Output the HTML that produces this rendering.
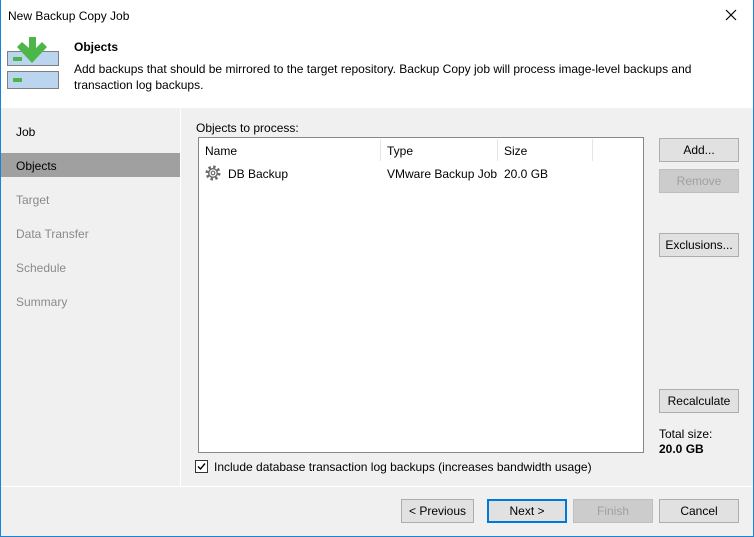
<!DOCTYPE html><html><head><style>
*{box-sizing:border-box;margin:0;padding:0}
body{width:754px;height:537px;overflow:hidden;font-family:"Liberation Sans",sans-serif;font-size:12px;color:#000;background:#f0f0f0;position:relative}
.abs{position:absolute}
.frame{left:0;top:0;width:754px;height:537px;border:1px solid #1883d7;border-top:none}
.btn{position:absolute;background:#e1e1e1;border:1px solid #adadad;text-align:center;line-height:22px;height:24px}
.dis{color:#a0a0a0;background:#cccccc;border-color:#bfbfbf}
.nav{position:absolute;left:16px;color:#8a8a8a}
</style></head><body>
<div class="abs" style="left:0;top:0;width:754px;height:108px;background:#fff"></div>
<div class="abs" style="left:8px;top:9px;font-size:12px">New Backup Copy Job</div>
<svg class="abs" style="left:724px;top:8px" width="14" height="14"><path d="M2 2L12 12M12 2L2 12" stroke="#000" stroke-width="1.2"/></svg>
<svg class="abs" style="left:7px;top:36px" width="54" height="54">
<rect x="0.5" y="15.5" width="51" height="14" fill="#bcd5ee" stroke="#7f7f7f"/>
<rect x="0.5" y="35.5" width="51" height="17" fill="#bcd5ee" stroke="#7f7f7f"/>
<rect x="6" y="21" width="9" height="4" fill="#4cb648"/>
<rect x="6" y="42" width="9" height="4" fill="#4cb648"/>
<path d="M22 1h7v11l6-6 5 5-15 16-15-16 5-5 7 6z" fill="#4cb648"/>
</svg>
<div class="abs" style="left:74px;top:40px;font-weight:bold">Objects</div>
<div class="abs" style="left:74px;top:61px;line-height:16px;width:660px">Add backups that should be mirrored to the target repository. Backup Copy job will process image-level backups and transaction log backups.</div>
<div class="abs" style="left:180px;top:108px;width:1px;height:378px;background:#fff"></div>
<div class="abs" style="left:1px;top:153px;width:179px;height:24px;background:#a0a0a0"></div>
<div class="nav" style="top:125px;color:#000">Job</div>
<div class="nav" style="top:159px;color:#000">Objects</div>
<div class="nav" style="top:193px">Target</div>
<div class="nav" style="top:227px">Data Transfer</div>
<div class="nav" style="top:261px">Schedule</div>
<div class="nav" style="top:295px">Summary</div>
<div class="abs" style="left:196px;top:121px">Objects to process:</div>
<div class="abs" style="left:198px;top:137px;width:446px;height:316px;background:#fff;border:1px solid #828790"></div>
<div class="abs" style="left:380px;top:139px;width:1px;height:22px;background:#e5e5e5"></div>
<div class="abs" style="left:497px;top:139px;width:1px;height:22px;background:#e5e5e5"></div>
<div class="abs" style="left:592px;top:139px;width:1px;height:22px;background:#e5e5e5"></div>
<div class="abs" style="left:205px;top:144px">Name</div>
<div class="abs" style="left:387px;top:144px">Type</div>
<div class="abs" style="left:504px;top:144px">Size</div>
<svg class="abs" style="left:204px;top:164px" width="18" height="18"><g fill="none" stroke="#6b6b6b"><circle cx="9" cy="9" r="6" stroke-width="3" stroke-dasharray="2.4 2.3"/><circle cx="9" cy="9" r="4.3" stroke-width="1.4"/><circle cx="9" cy="9" r="1.8" stroke-width="1.2"/></g></svg>
<div class="abs" style="left:228px;top:167px">DB Backup</div>
<div class="abs" style="left:387px;top:167px">VMware Backup Job</div>
<div class="abs" style="left:504px;top:167px">20.0 GB</div>
<div class="btn" style="left:659px;top:138px;width:80px">Add...</div>
<div class="btn dis" style="left:659px;top:169px;width:80px">Remove</div>
<div class="btn" style="left:659px;top:233px;width:80px">Exclusions...</div>
<div class="btn" style="left:659px;top:389px;width:80px">Recalculate</div>
<div class="abs" style="left:659px;top:427px">Total size:</div>
<div class="abs" style="left:659px;top:442px;font-weight:bold">20.0 GB</div>
<div class="abs" style="left:195px;top:460px;width:13px;height:13px;border:1px solid #333;background:#fff"></div>
<svg class="abs" style="left:196px;top:461px" width="11" height="11"><path d="M2 5.5L4.5 8L9 2.5" stroke="#000" stroke-width="1.4" fill="none"/></svg>
<div class="abs" style="left:214px;top:460px">Include database transaction log backups (increases bandwidth usage)</div>
<div class="abs" style="left:1px;top:486px;width:752px;height:1px;background:#fff"></div>
<div class="btn" style="left:401px;top:499px;width:73px">&lt; Previous</div>
<div class="btn" style="left:487px;top:499px;width:80px;border:2px solid #0078d7;line-height:20px">Next &gt;</div>
<div class="btn dis" style="left:573px;top:499px;width:80px">Finish</div>
<div class="btn" style="left:659px;top:499px;width:80px">Cancel</div>
<div class="abs frame"></div>
</body></html>
